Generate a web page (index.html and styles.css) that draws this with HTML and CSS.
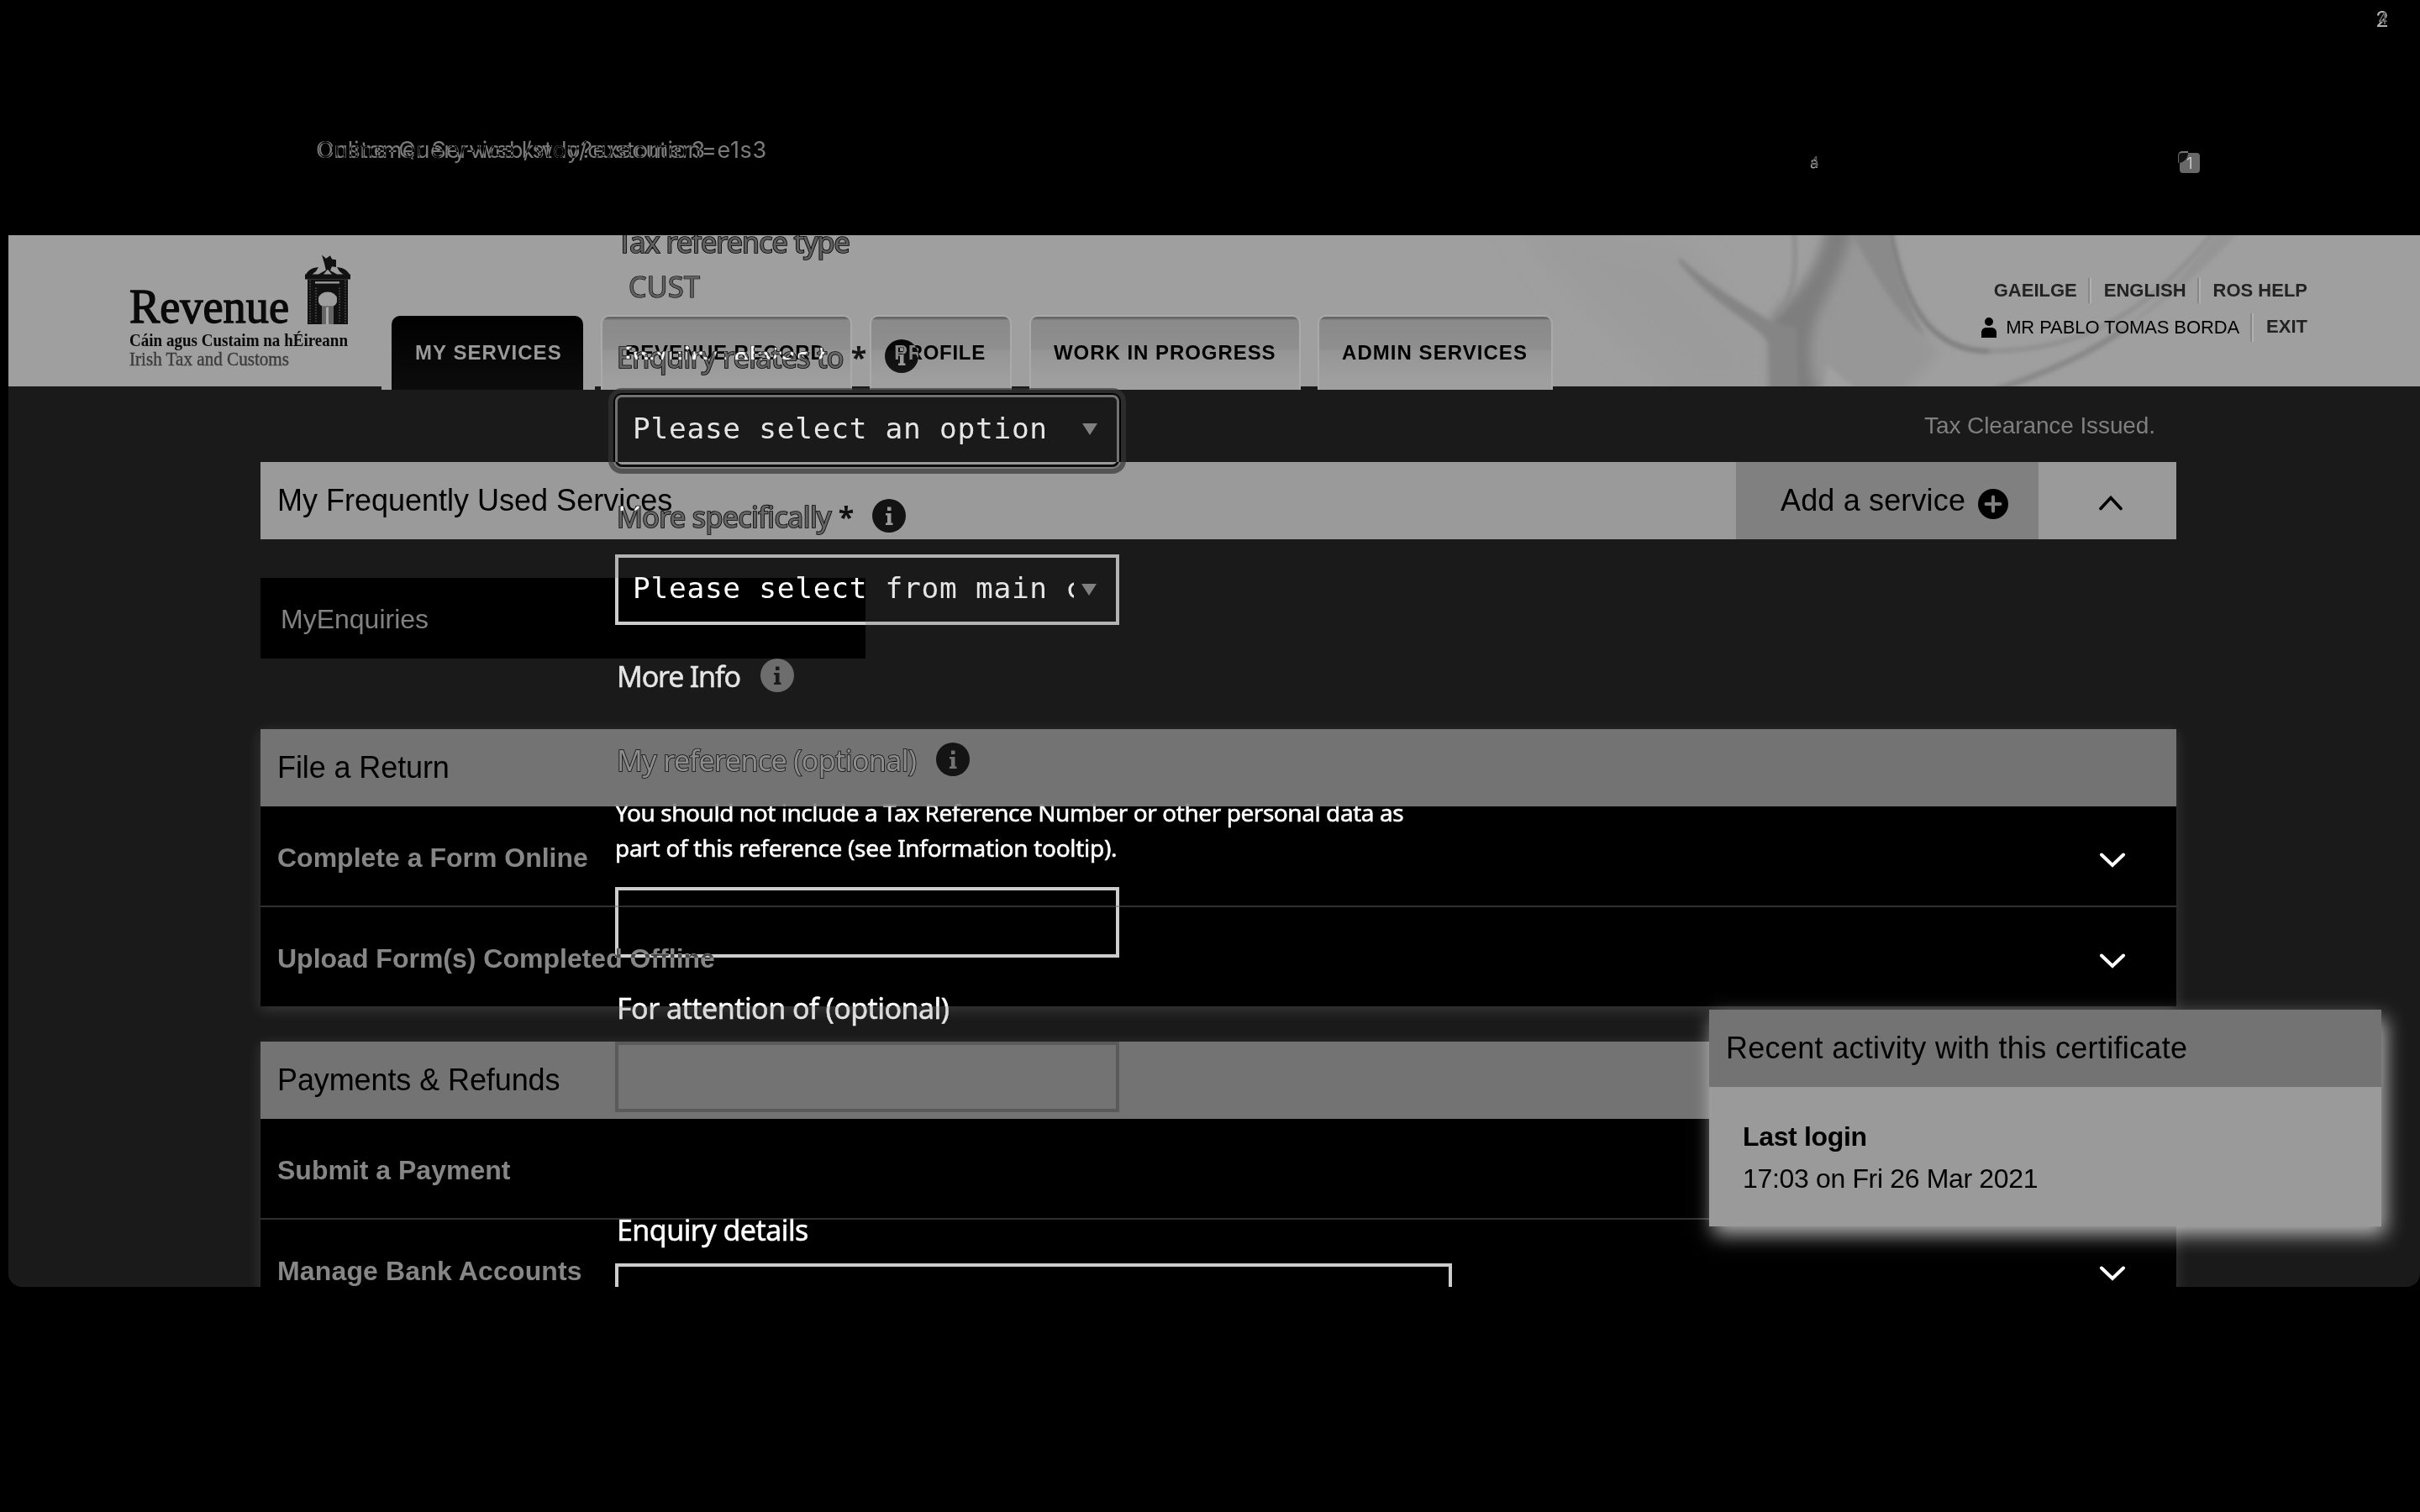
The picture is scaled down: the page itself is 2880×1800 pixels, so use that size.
FILE: index.html
```html
<!DOCTYPE html>
<html lang="en">
<head>
<meta charset="utf-8">
<title>Revenue - My Services</title>
<link rel="stylesheet" href="styles.css">
</head>
<body>
<div class="screen">
  <div class="chrome">
    <span class="chrome-count">2<span class="ghost ghost-count">4</span></span>
    <span class="address">Online-Query-web/stoo?execution=e1s3<span class="ghost">Customer Service kwdy/customer3</span></span>
    <span class="chrome-mini">a<span class="ghost ghost-mini">4</span></span>
    <span class="chrome-badge">1<span class="badge-ghost"></span></span>
  </div>

  <div class="page">
    <header class="header">
      <svg class="swoosh" width="1200" height="180" viewBox="1680 280 1200 180">
        <defs>
          <filter id="b3" x="-20%" y="-20%" width="140%" height="140%"><feGaussianBlur stdDeviation="2.500"/></filter>
          <filter id="b6" x="-20%" y="-20%" width="140%" height="140%"><feGaussianBlur stdDeviation="7"/></filter>
          <filter id="b9" x="-30%" y="-30%" width="160%" height="160%"><feGaussianBlur stdDeviation="16"/></filter>
        </defs>
        <path d="M1800 250L2000 290L2100 400V480H2000C1940 400 1860 350 1800 250Z" fill="#9b9b9b" filter="url(#b9)"/>
        <path d="M2110 390C2150 350 2170 310 2175 270H2250C2255 330 2270 380 2310 420L2250 480H2110Z" fill="#979797" filter="url(#b6)"/>
        <path d="M2174 270C2165 320 2140 350 2108 378V470H2166C2150 440 2152 400 2165 370C2180 340 2195 310 2206 270Z" fill="#7e7e7e" filter="url(#b6)"/>
        <path d="M1998 312C2040 365 2090 385 2105 408L2108 470H2140L2138 390L2110 384C2080 365 2035 340 1998 306Z" fill="#858585" filter="url(#b3)"/>
        <path d="M2134 270C2140 320 2135 350 2116 374" fill="none" stroke="#8c8c8c" stroke-width="5" filter="url(#b3)"/>
        <path d="M2200 270C2230 330 2262 378 2292 402C2265 350 2255 310 2246 270Z" fill="#8a8a8a" filter="url(#b3)"/>
        <path d="M2249 272C2267 370 2302 418 2367 418C2480 418 2560 370 2640 270" fill="none" stroke="#8e8e8e" stroke-width="5" filter="url(#b3)"/>
        <path d="M2249 272C2267 370 2302 418 2367 418" fill="none" stroke="#7a7a7a" stroke-width="4" filter="url(#b3)"/>
        <path d="M2375 464C2480 430 2580 370 2670 270H2640C2580 360 2520 410 2375 464Z" fill="#959595" filter="url(#b3)"/>
        <path d="M2375 464C2440 442 2490 420 2530 390" fill="none" stroke="#858585" stroke-width="6" filter="url(#b3)"/>
        <path d="M2174 434L2212 466H2170Z" fill="#a0a0a0" filter="url(#b3)"/>
      </svg>
      <svg class="logo" width="270" height="145" viewBox="0 0 270 145">
        <g class="logo-text">
          <text x="0" y="82" font-size="57" textLength="190" lengthAdjust="spacingAndGlyphs" stroke="#0a0a0a" stroke-width="1.400">Revenue</text>
          <text x="0" y="110" font-size="22" font-weight="bold" textLength="260" lengthAdjust="spacingAndGlyphs">Cáin agus Custaim na hÉireann</text>
          <text x="0" y="133" font-size="23" textLength="190" lengthAdjust="spacingAndGlyphs" fill="#3c3c3c" stroke="#3c3c3c" stroke-width=".4">Irish Tax and Customs</text>
        </g>
        <g transform="scale(1 .724)">
          <g fill="#111">
            <path d="M229 2l5 6 5-5 2 6 5 1v12l-5-1-2 7 5 9h-14l4-9-2-12z"/>
            <path d="M209 38c2-10 8-15 16-16l-3 7-7 8zM263 38c-2-10-8-15-16-16l3 7 7 8z"/>
            <path d="M209 34h16l9-7h4l9 7h16v8h-54z"/>
            <path fill-rule="evenodd" d="M212 42h48v74h-17V86a11 11 0 1 0-14 0v30h-17zM221 46v3h29v-3z"/>
          </g>
          <g stroke="#555" stroke-width="1.5" stroke-dasharray="2 2.5"><path d="M215 44v72M222 56v58M250 56v58M257 44v72"/></g>
          <path d="M229 86h14v30h-14z" fill="#666"/><path d="M234 88h3v28h-3z" fill="#aaa"/>
          <circle cx="236" cy="74" r="11" fill="#9f9f9f"/>
          <path d="M231 34l5-8 5 8z" fill="#9f9f9f"/>
        </g>
      </svg>
      <nav class="tabs">
        <a class="tab tab-on">MY SERVICES</a>
        <a class="tab tab-record">REVENUE RECORD</a>
        <a class="tab tab-profile">PROFILE</a>
        <a class="tab tab-work">WORK IN PROGRESS</a>
        <a class="tab tab-admin">ADMIN SERVICES</a>
      </nav>
      <div class="user">
        <div class="user-row"><b>GAEILGE</b><i class="sep"></i><b>ENGLISH</b><i class="sep"></i><b>ROS HELP</b></div>
        <div class="user-row user-row-name">
          <svg class="person" width="18" height="24" viewBox="0 0 18 24"><ellipse cx="9" cy="5" rx="5" ry="5"/><path d="M0 24v-6c0-4 3-6 6-6h6c3 0 6 2 6 6v6z"/></svg>
          <span class="name">MR PABLO TOMAS BORDA</span><i class="sep sep-tall"></i><b>EXIT</b>
        </div>
      </div>
    </header>

    <main class="content">
      <p class="notice">Tax Clearance Issued.</p>
      <section class="frequent">
        <h2 class="frequent-title">My Frequently Used Services</h2>
        <div class="add">Add a service
          <svg width="36" height="36" viewBox="0 0 36 36"><circle cx="18" cy="18" r="18"/><path d="M18 9.500v17M9.500 18h17" stroke="#808080" stroke-width="4" stroke-linecap="round"/></svg>
        </div>
        <div class="collapse"><svg width="28" height="18" viewBox="0 0 28 18"><path d="M2 15.500L14 2.500 26 15.500" fill="none" stroke="#000" stroke-width="3.600" stroke-linecap="round"/></svg></div>
      </section>
      <div class="enquiries">MyEnquiries</div>

      <section class="card">
        <h2 class="card-title">File a Return</h2>
        <div class="row">Complete a Form Online<svg class="down" width="30" height="18" viewBox="0 0 30 18"><path d="M2 2.500L15 15 28 2.500"/></svg></div>
        <div class="row">Upload Form(s) Completed Offline<svg class="down" width="30" height="18" viewBox="0 0 30 18"><path d="M2 2.500L15 15 28 2.500"/></svg></div>
      </section>
      <section class="card card-pay">
        <h2 class="card-title">Payments &amp; Refunds</h2>
        <div class="row">Submit a Payment</div>
        <div class="row row-bank">Manage Bank Accounts<svg class="down" width="30" height="18" viewBox="0 0 30 18"><path d="M2 2.500L15 15 28 2.500"/></svg></div>
      </section>
    </main>

    <aside class="recent">
      <h2 class="card-title recent-title">Recent activity with this certificate</h2>
      <div class="recent-body"><b>Last login</b><span>17:03 on Fri 26 Mar 2021</span></div>
    </aside>
  </div>

  <div class="overlay">
    <form class="form">
      <div class="label on-light l-type"><span>Tax reference type</span></div>
      <div class="label on-light l-cust"><span>CUST</span></div>
      <div class="label on-light l-relates"><span>Enquiry relates to</span><em>*</em><svg class="info" width="40" height="40" viewBox="0 0 40 40"><use href="#info"/></svg></div>
      <div class="select select-focus"><span>Please select an option</span><i class="arrow"></i></div>
      <div class="label on-light l-spec"><span>More specifically</span><em>*</em><svg class="info" width="40" height="40" viewBox="0 0 40 40"><use href="#info"/></svg></div>
      <div class="select"><span>Please select from main category</span><i class="arrow"></i></div>
      <div class="label l-more"><span>More Info</span><svg class="info" width="40" height="40" viewBox="0 0 40 40"><use href="#info"/></svg></div>
      <div class="label on-light l-ref"><span>My reference (optional)</span><svg class="info" width="40" height="40" viewBox="0 0 40 40"><use href="#info"/></svg></div>
      <p class="hint">You should not include a Tax Reference Number or other personal data as<br><span class="hint-b">part of this reference (see Information tooltip).</span></p>
      <div class="field"></div>
      <div class="label l-att"><span>For attention of (optional)</span></div>
      <div class="field field-att"></div>
      <div class="label l-details"><span>Enquiry details</span></div>
      <div class="field area"></div>
    </form>
  </div>
</div>
<svg class="defs" width="0" height="0">
  <symbol id="info" viewBox="0 0 40 40"><path fill="#878787" fill-rule="evenodd" d="M20 0a20 20 0 1 0 0 40 20 20 0 1 0 0-40zM18 9.500h4.500v4.500h-4.500zM16 17h6.500v11.500h2v2.500h-8.500v-2.500h2v-9h-2z"/></symbol>
</svg>
</body>
</html>
```
FILE: styles.css
```css
* { box-sizing: border-box; }
body { margin: 0; background: #000; font-family: "Liberation Sans", Arial, sans-serif; }
h2, p { margin: 0; font-weight: normal; }
.defs { position: absolute; }
.screen { position: relative; isolation: isolate; width: 2880px; height: 1800px; overflow: hidden; background: #000; }

/* window strip above the page */
.chrome { position: relative; height: 280px; font-family: Inter, Roboto, sans-serif; color: #7a7a7a; }
.chrome span { position: absolute; line-height: 1; white-space: nowrap; }
.ghost { left: 0; top: 0; color: #7a7a7a; mix-blend-mode: difference; }
.address { left: 376px; top: 165px; font-size: 27px; letter-spacing: .62px; isolation: isolate; }
.address .ghost { left: 2px; letter-spacing: .4px; }
.chrome-count { left: 2827px; top: 10px; font-size: 26px; color: #b0b0b0; isolation: isolate; }
.chrome-count .ghost-count { color: #777; top: 4px; left: 3px; font-size: 18px; }
.chrome-mini { left: 2154px; top: 185px; font-size: 18px; color: #aaa; isolation: isolate; }
.chrome-mini .ghost-mini { color: #555; font-size: 17px; }
.chrome .chrome-badge { left: 2594px; top: 182px; width: 24px; height: 24px; border-radius: 4px; background: #686868; color: #c8c8c8; font-size: 18px; line-height: 26px; text-align: center; }
.chrome .badge-ghost { left: -2px; top: -2px; width: 12px; height: 14px; background: #111; border-top: 2px solid #777; border-left: 1px solid #666; border-radius: 5px 0 12px 0; }

.page { position: relative; width: 2870px; height: 1252px; margin-left: 10px; background: #1a1a1a; border-radius: 0 0 16px 16px; overflow: hidden; }

/* header */
.header { position: relative; display: flex; align-items: flex-start; height: 180px; background: #9f9f9f; }
.swoosh { position: absolute; right: 0; top: 0; }
.logo { flex: none; margin: 22px 0 0 144px; overflow: visible; }
.logo-text { font-family: "Liberation Serif", serif; fill: #0a0a0a; }
.tabs { display: flex; align-items: flex-start; margin: 95px 0 0 30px; position: relative; }
.tab { height: 89px; border: 2px solid #aaa; border-bottom: 0; border-radius: 10px 10px 0 0; background: linear-gradient(#666 0 2px, #8a8a8a 4px, #8f8f8f 39px, #959595 40px, #9f9f9f 75px); color: #000; font-weight: bold; font-size: 24px; line-height: 86px; padding-left: 27px; letter-spacing: .7px; white-space: nowrap; }
.tab-on { box-sizing: content-box; width: 200px; height: 88px; border: 0; margin: 1px 7px 0 12px; padding-left: 28px; background: linear-gradient(#000, #0c0c0c); color: #9a9a9a; line-height: 87px; position: relative; letter-spacing: 1.050px; }
.tab-on::before, .tab-on::after { content: ""; position: absolute; bottom: 0; height: 4px; width: 12px; background: #9f9f9f; left: -12px; }
.tab-on::after { left: auto; right: -14px; width: 14px; }
.tab-record { width: 299px; margin-left: 14px; letter-spacing: .85px; }
.tab-profile { width: 169px; margin-left: 21px; }
.tab-work { width: 323px; margin-left: 21px; letter-spacing: .95px; }
.tab-admin { width: 280px; margin-left: 20px; letter-spacing: 1.050px; }
.user { position: absolute; right: 134px; top: 48px; font-size: 22px; color: #000; }
.user-row { display: flex; justify-content: flex-end; align-items: center; height: 36px; white-space: nowrap; }
.user-row b { color: #232323; }
.user-row-name { height: 40px; margin-top: 6px; }
.user-row-name b { position: relative; top: -1px; }
.name { letter-spacing: -.1px; }
.sep { width: 4px; height: 30px; margin: 0 15px 0 13px; border-left: 2px solid #888; border-right: 2px solid #b0b0b0; }
.sep-tall { height: 34px; }
.person { margin-right: 11px; }

/* services */
.content { width: 2280px; margin-left: 300px; }
.notice { height: 90px; padding: 37px 25px 0 0; line-height: 20px; font-size: 28px; letter-spacing: -.1px; color: #7f7f7f; text-align: right; }
.frequent { display: flex; height: 92px; background: #9a9a9a; font-size: 36px; line-height: 91px; }
.frequent-title { flex: 1; padding-left: 20px; font-size: 36px; }
.add { display: flex; align-items: center; gap: 15px; width: 360px; height: 92px; padding: 0 0 2px 53px; background: #808080; letter-spacing: .15px; }
.add svg { margin-top: 10px; }
.collapse { display: flex; align-items: center; justify-content: center; width: 164px; padding: 5px 0 0 8px; }
.enquiries { width: 720px; height: 96px; margin-top: 46px; padding-left: 24px; background: #000; color: #828282; font-size: 32px; line-height: 98px; }
.card { margin-top: 84px; box-shadow: 0 4px 16px rgba(255,255,255,.14); }
.card-pay { margin-top: 42px; }
.card-title { height: 92px; padding-left: 20px; background: #737373; font-size: 36px; line-height: 91px; letter-spacing: -.1px; color: #000; }
.row { display: flex; align-items: center; justify-content: space-between; height: 118px; padding: 5px 61px 0 20px; background: #000; color: #868686; font-size: 32px; font-weight: bold; }
.row + .row { height: 120px; border-top: 2px solid #303030; padding-top: 4px; }
.row-bank { letter-spacing: .15px; }
.down { margin-top: 5px; fill: none; stroke: #fff; stroke-width: 4; stroke-linecap: round; }

.recent { position: absolute; left: 2024px; top: 922px; width: 800px; height: 258px; background: #9a9a9a; box-shadow: 5px 10px 22px rgba(255,255,255,.68); color: #000; }
.recent-title { letter-spacing: .3px; }
.recent-body { display: flex; flex-direction: column; padding: 34px 40px; font-size: 32px; line-height: 50px; letter-spacing: -.34px; }

/* enquiry form, inverted against what lies under it */
.overlay { position: absolute; left: 0; top: 280px; width: 2880px; height: 1252px; overflow: hidden; mix-blend-mode: difference; pointer-events: none; }
.form { margin: -12px 0 0 732px; width: 1000px; color: #fff; font-family: "Noto Sans", "Open Sans", sans-serif; font-size: 34px; -webkit-text-stroke: .5px #fff; }
.label { display: flex; align-items: center; height: 40px; line-height: 40px; padding-left: 2px; white-space: nowrap; letter-spacing: -.6px; }
.on-light span { -webkit-text-stroke: 1.700px #a0a0a0; paint-order: stroke fill; }
.label em { font-style: normal; font-weight: bold; color: #8a8a8a; margin-left: 9px; width: 16px; letter-spacing: 0; -webkit-text-stroke: 0; }
.info { flex: none; margin: -2px 0 0 24px; }
.l-type { letter-spacing: -.9px; }
.l-cust { margin-top: 13px; padding-left: 16px; letter-spacing: .3px; }
.l-cust span { -webkit-text-stroke: 1.200px #a0a0a0; }
.l-relates { margin-top: 44px; }
.l-spec { margin-top: 39px; letter-spacing: -.6px; }
.l-more { margin-top: 41px; letter-spacing: -1.200px; }
.l-ref { margin-top: 60px; letter-spacing: -.62px; }
.l-ref span { -webkit-text-stroke: 1.600px #808080; }
.l-att { margin-top: 40px; height: 39px; letter-spacing: -.53px; }
.l-details { margin-top: 120px; height: 39px; letter-spacing: -.55px; }
.select { position: relative; width: 600px; height: 84px; margin-top: 25px; padding: 0 50px 0 17px; border: 4px solid #cdcdcd; font-family: "DejaVu Sans Mono", monospace; font-size: 34.500px; line-height: 73px; letter-spacing: .7px; white-space: nowrap; -webkit-text-stroke: 0; }
.select span { display: block; overflow: hidden; }
.select-focus { height: 86px; border: 3px solid #8c8c8c; border-radius: 8px; line-height: 75px; box-shadow: 0 0 0 2px #1a1a1a, 0 0 0 8px #464646; padding-left: 18px; }
.arrow { position: absolute; right: 23px; top: 31px; border: 9px solid transparent; border-top: 14px solid #9a9a9a; border-bottom: 0; }
.hint { margin-top: 21px; height: 84px; padding-left: 0; font-size: 28px; line-height: 42px; white-space: nowrap; letter-spacing: -.44px; }
.hint-b { letter-spacing: -.3px; }
.field { width: 600px; height: 84px; margin-top: 26px; border: 4px solid #cdcdcd; }
.field-att { margin-top: 21px; }
.area { width: 996px; height: 200px; margin-top: 21px; }
```
